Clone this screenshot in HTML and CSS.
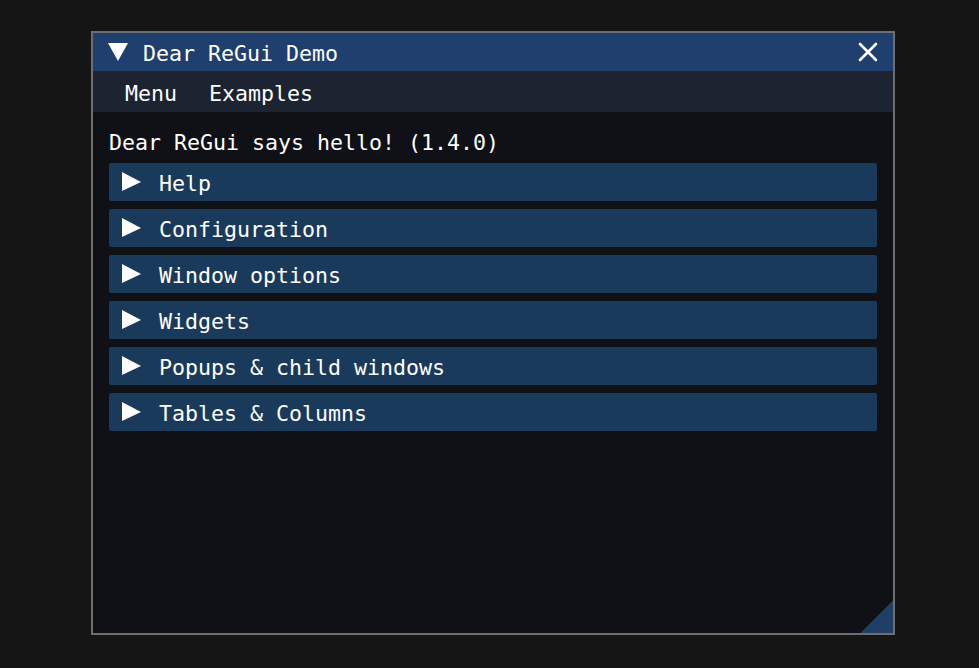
FILE: index.html
```html
<!DOCTYPE html>
<html>
<head>
<meta charset="utf-8">
<link rel="stylesheet" href="styles.css">
</head>
<body>
<div class="window">
  <div class="titlebar">
    <svg class="collapse" width="20" height="20" viewBox="0 0 20 20"><polygon points="0,1 20,1 10,19" fill="#ffffff"/></svg>
    <span class="title">Dear ReGui Demo</span>
    <svg class="close" width="20" height="20" viewBox="0 0 20 20"><path d="M2 2 L18 18 M18 2 L2 18" stroke="#ffffff" stroke-width="2.6" stroke-linecap="round"/></svg>
  </div>
  <div class="menubar">
    <span class="menuitem">Menu</span>
    <span class="menuitem">Examples</span>
  </div>
  <div class="content">
    <div class="hello">Dear ReGui says hello! (1.4.0)</div>
    <div class="header"><svg class="arrow" width="20" height="20" viewBox="0 0 20 20"><polygon points="1,0 20,10 1,19" fill="#ffffff"/></svg><span>Help</span></div>
    <div class="header"><svg class="arrow" width="20" height="20" viewBox="0 0 20 20"><polygon points="1,0 20,10 1,19" fill="#ffffff"/></svg><span>Configuration</span></div>
    <div class="header"><svg class="arrow" width="20" height="20" viewBox="0 0 20 20"><polygon points="1,0 20,10 1,19" fill="#ffffff"/></svg><span>Window options</span></div>
    <div class="header"><svg class="arrow" width="20" height="20" viewBox="0 0 20 20"><polygon points="1,0 20,10 1,19" fill="#ffffff"/></svg><span>Widgets</span></div>
    <div class="header"><svg class="arrow" width="20" height="20" viewBox="0 0 20 20"><polygon points="1,0 20,10 1,19" fill="#ffffff"/></svg><span>Popups &amp; child windows</span></div>
    <div class="header"><svg class="arrow" width="20" height="20" viewBox="0 0 20 20"><polygon points="1,0 20,10 1,19" fill="#ffffff"/></svg><span>Tables &amp; Columns</span></div>
    <div class="grip"></div>
  </div>
</div>
</body>
</html>
```
FILE: styles.css
```css
html, body {
  margin: 0;
  padding: 0;
  background: #151515;
}
body {
  padding: 31px 0 0 91px;
  height: 668px;
  box-sizing: border-box;
  overflow: hidden;
  font-family: "DejaVu Sans Mono", "Liberation Mono", monospace;
  font-size: 21.6px;
  color: #ffffff;
}
.window {
  width: 804px;
  height: 604px;
  box-sizing: border-box;
  border: 2px solid #6e6e70;
  background: #0f1116;
  display: flex;
  flex-direction: column;
}
.titlebar {
  height: 38px;
  box-sizing: border-box;
  padding: 4px 15px 0 15px;
  line-height: 34px;
  background: #1f3f6e;
  display: flex;
  align-items: flex-start;
}
.titlebar .collapse {
  margin-top: 5px;
  margin-right: 15px;
  flex: none;
}
.titlebar .title {
  flex: 1;
  white-space: pre;
}
.titlebar .close {
  margin-top: 5px;
  flex: none;
}
.menubar {
  height: 41px;
  box-sizing: border-box;
  padding: 4px 0 0 16px;
  line-height: 37px;
  background: #1b2430;
  display: flex;
}
.menuitem {
  padding: 0 16px;
  white-space: pre;
}
.content {
  flex: 1;
  position: relative;
  padding: 19px 16px 0 16px;
  display: flex;
  flex-direction: column;
  gap: 8px;
}
.hello {
  line-height: 24px;
  white-space: pre;
}
.header {
  height: 38px;
  box-sizing: border-box;
  padding: 3px 12px 0 12px;
  line-height: 35px;
  background: #1a3a5c;
  border-radius: 2px;
  display: flex;
  align-items: flex-start;
  white-space: pre;
}
.header .arrow {
  flex: none;
  margin-top: 6px;
  margin-right: 18px;
}
.grip {
  position: absolute;
  right: 0;
  bottom: 0;
  width: 32px;
  height: 32px;
  background: linear-gradient(to bottom right, transparent 50%, #1f3f66 50%);
}
```
